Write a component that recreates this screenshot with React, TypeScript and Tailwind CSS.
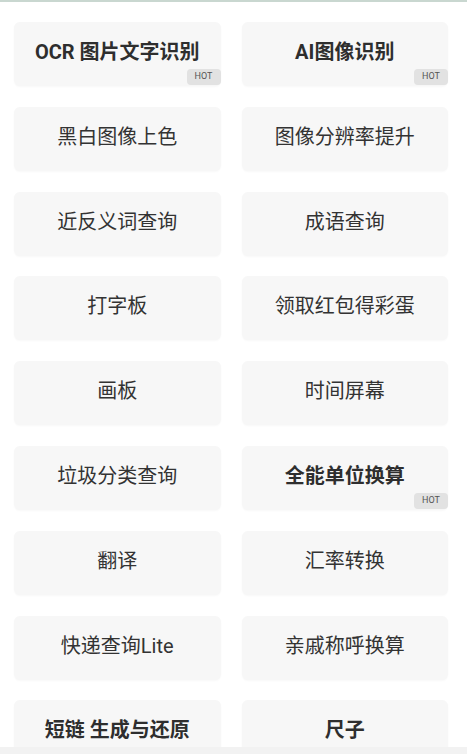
const tools: { name: string; bold?: boolean; hot?: boolean }[] = [
  { name: 'OCR 图片文字识别', bold: true, hot: true },
  { name: 'AI图像识别', bold: true, hot: true },
  { name: '黑白图像上色' },
  { name: '图像分辨率提升' },
  { name: '近反义词查询' },
  { name: '成语查询' },
  { name: '打字板' },
  { name: '领取红包得彩蛋' },
  { name: '画板' },
  { name: '时间屏幕' },
  { name: '垃圾分类查询' },
  { name: '全能单位换算', bold: true, hot: true },
  { name: '翻译' },
  { name: '汇率转换' },
  { name: '快递查询Lite' },
  { name: '亲戚称呼换算' },
  { name: '短链 生成与还原', bold: true },
  { name: '尺子', bold: true },
];

const App = () => {
  return (
    <div
      className="flex flex-col h-[754px] w-[467px] overflow-hidden bg-white"
      style={{ fontFamily: 'Roboto, "Noto Sans CJK SC", sans-serif' }}
    >
      <div className="h-[2px] bg-[#c9d7d0]"></div>
      <div className="flex-1 overflow-hidden pt-[20px] pl-[14px] pr-[19px]">
        <div className="grid grid-cols-2 gap-x-[21px] gap-y-[20.8px]">
          {tools.map((tool) => (
            <div
              key={tool.name}
              className="relative flex items-center justify-center h-[64px] pb-[4px] rounded-[6px] bg-[#f7f7f7] shadow-[0_1px_2px_rgba(0,0,0,0.03)]"
            >
              <span
                className={
                  tool.bold
                    ? 'text-[20px] font-bold text-[#2e2e2e]'
                    : 'text-[20px] text-[#333333]'
                }
              >
                {tool.name}
              </span>
              {tool.hot && (
                <span className="absolute right-0 bottom-[1px] flex items-center justify-center w-[34px] h-[16px] rounded-[4px] bg-[#e2e2e2] text-[9px] text-[#555555]">
                  HOT
                </span>
              )}
            </div>
          ))}
        </div>
      </div>
      <div className="h-[7px] bg-[#f2f2f2]"></div>
    </div>
  );
};

export default App;
